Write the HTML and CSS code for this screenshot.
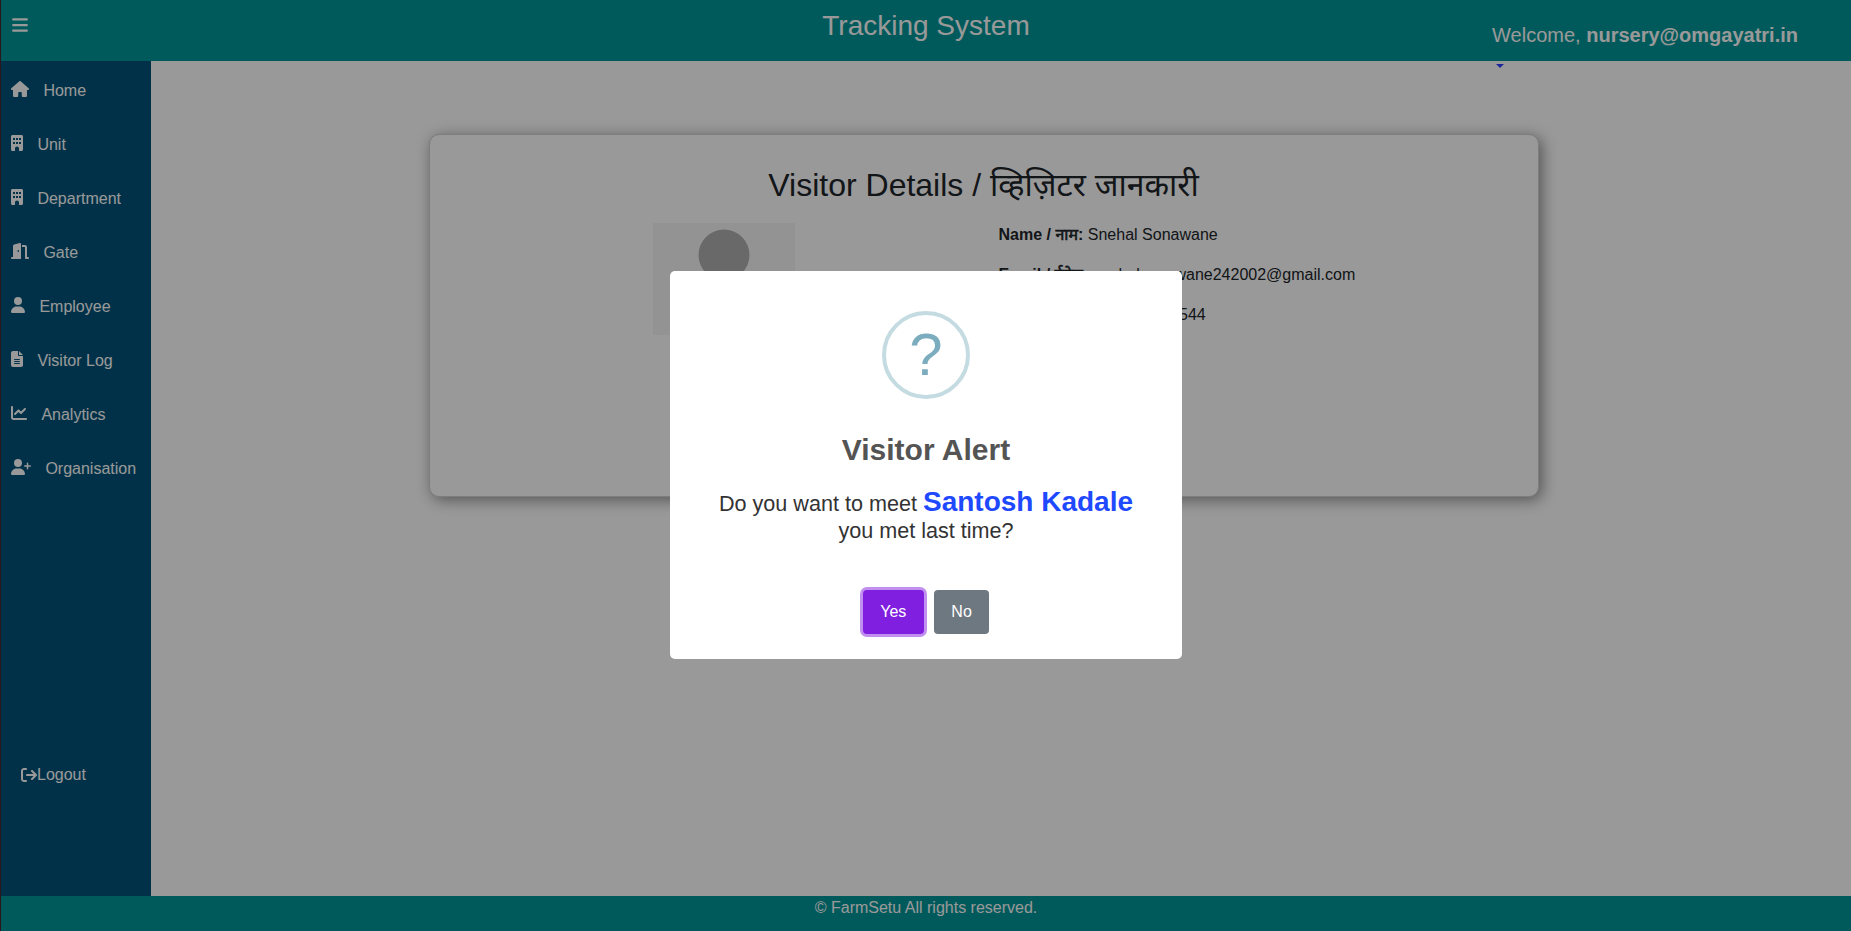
FILE: index.html
```html
<!DOCTYPE html>
<html lang="en">
<head>
<meta charset="utf-8">
<title>Tracking System</title>
<link rel="stylesheet" href="styles.css">
</head>
<body>
<div class="app">
  <header class="header">
    <svg class="menu-icon" width="16" height="18" viewBox="0 0 448 512"><path d="M0 96c0-17.700 14.300-32 32-32h384c17.700 0 32 14.300 32 32s-14.300 32-32 32H32C14.300 128 0 113.700 0 96zm0 160c0-17.700 14.300-32 32-32h384c17.700 0 32 14.300 32 32s-14.300 32-32 32H32c-17.700 0-32-14.300-32-32zm448 160c0 17.700-14.300 32-32 32H32c-17.700 0-32-14.300-32-32s14.300-32 32-32h384c17.700 0 32 14.300 32 32z"/></svg>
    <h1 class="brand">Tracking System</h1>
    <div class="welcome">Welcome, <strong>nursery@omgayatri.in</strong></div>
  </header>
  <div class="body">
    <nav class="sidebar">
      <a class="link"><svg width="18" height="16" viewBox="0 0 576 512"><path d="M575.800 255.500c0 18-15 32.100-32 32.100h-32l.7 160.200c0 2.700-.2 5.400-.5 8.100V472c0 22.100-17.900 40-40 40h-88c-22.100 0-40-17.900-40-40v-88c0-17.700-14.300-32-32-32h-48c-17.700 0-32 14.300-32 32v88c0 22.100-17.900 40-40 40h-88c-22.100 0-40-17.900-40-40V287.600H32c-18 0-32-14-32-32.100 0-9 3-17 10-24L266.400 8c7-7 15-8 22-8s15 2 21 7l255.400 224.500c8 7 12 15 11 24z"/></svg><span>Home</span></a>
      <a class="link"><svg width="12" height="16" viewBox="0 0 384 512"><path fill-rule="evenodd" d="M48 0C21.500 0 0 21.500 0 48v416c0 26.500 21.500 48 48 48h80v-80c0-35 29-64 64-64s64 29 64 64v80h80c26.500 0 48-21.500 48-48V48c0-26.500-21.500-48-48-48zM64 96h64v64H64zM160 96h64v64h-64zM256 96h64v64h-64zM64 224h64v64H64zM160 224h64v64h-64zM256 224h64v64h-64z"/></svg><span>Unit</span></a>
      <a class="link"><svg width="12" height="16" viewBox="0 0 384 512"><path fill-rule="evenodd" d="M48 0C21.500 0 0 21.500 0 48v416c0 26.500 21.500 48 48 48h80v-80c0-35 29-64 64-64s64 29 64 64v80h80c26.500 0 48-21.500 48-48V48c0-26.500-21.500-48-48-48zM64 96h64v64H64zM160 96h64v64h-64zM256 96h64v64h-64zM64 224h64v64H64zM160 224h64v64h-64zM256 224h64v64h-64z"/></svg><span>Department</span></a>
      <a class="link"><svg width="18" height="16" viewBox="0 0 576 512"><path fill-rule="evenodd" d="M320 32c0-10-4.500-19.300-12.300-25.300S289.800-1.500 280.200 1l-179.900 45C79 51.300 64 70.500 64 92.500V448H32c-17.700 0-32 14.300-32 32s14.300 32 32 32h288V32zm-64 224c0 17.700-10.700 32-24 32s-24-14.300-24-32 10.700-32 24-32 24 14.300 24 32zm96-128h96v352c0 17.700 14.300 32 32 32h64c17.700 0 32-14.300 32-32s-14.300-32-32-32h-32V128c0-35.300-28.700-64-64-64h-96z"/></svg><span>Gate</span></a>
      <a class="link"><svg width="14" height="16" viewBox="0 0 448 512"><path d="M224 256a128 128 0 1 0 0-256 128 128 0 1 0 0 256zm-45.700 48C79.800 304 0 383.800 0 482.300 0 498.700 13.300 512 29.700 512h388.600c16.400 0 29.700-13.300 29.700-29.700 0-98.500-79.800-178.300-178.300-178.300z"/></svg><span>Employee</span></a>
      <a class="link"><svg width="12" height="16" viewBox="0 0 384 512"><path fill-rule="evenodd" d="M64 0C28.700 0 0 28.700 0 64v384c0 35.300 28.700 64 64 64h256c35.300 0 64-28.700 64-64V160H256c-17.700 0-32-14.300-32-32V0zm192 0v128h128zM112 256h160c21 0 21 32 0 32H112c-21 0-21-32 0-32zm0 64h160c21 0 21 32 0 32H112c-21 0-21-32 0-32zm0 64h160c21 0 21 32 0 32H112c-21 0-21-32 0-32z"/></svg><span>Visitor Log</span></a>
      <a class="link"><svg width="16" height="16" viewBox="0 0 512 512"><path d="M64 64c0-17.700-14.300-32-32-32S0 46.300 0 64v336c0 44.200 35.800 80 80 80h400c17.700 0 32-14.300 32-32s-14.300-32-32-32H80c-8.800 0-16-7.200-16-16zm406.600 86.600c12.500-12.500 12.500-32.800 0-45.300s-32.800-12.500-45.300 0L320 210.700l-57.400-57.300c-12.500-12.500-32.800-12.500-45.300 0l-112 112c-12.500 12.500-12.500 32.800 0 45.300s32.800 12.500 45.300 0l89.400-89.400 57.400 57.400c12.500 12.500 32.800 12.500 45.300 0z"/></svg><span>Analytics</span></a>
      <a class="link"><svg width="20" height="16" viewBox="0 0 640 512"><path d="M96 128a128 128 0 1 1 256 0 128 128 0 1 1-256 0zM0 482.300C0 383.800 79.800 304 178.300 304h91.400c98.500 0 178.300 79.800 178.300 178.300 0 16.400-13.300 29.700-29.700 29.700H29.700C13.300 512 0 498.700 0 482.300zM504 312v-64h-64c-13.300 0-24-10.700-24-24s10.700-24 24-24h64v-64c0-13.300 10.700-24 24-24s24 10.700 24 24v64h64c13.300 0 24 10.700 24 24s-10.700 24-24 24h-64v64c0 13.300-10.700 24-24 24s-24-10.700-24-24z"/></svg><span>Organisation</span></a>
      <a class="logout"><svg width="16" height="16" viewBox="0 0 512 512"><path d="M502.600 278.600c12.500-12.500 12.500-32.800 0-45.300l-128-128c-12.500-12.500-32.800-12.500-45.300 0s-12.500 32.800 0 45.300l73.400 73.400H192c-17.700 0-32 14.300-32 32s14.300 32 32 32h210.700l-73.400 73.400c-12.500 12.500-12.500 32.800 0 45.300s32.800 12.500 45.300 0zM160 96c17.700 0 32-14.300 32-32s-14.300-32-32-32H96C43 32 0 75 0 128v256c0 53 43 96 96 96h64c17.700 0 32-14.300 32-32s-14.300-32-32-32H96c-17.700 0-32-14.300-32-32V128c0-17.700 14.300-32 32-32z"/></svg><span>Logout</span></a>
    </nav>
    <main class="main">
      <span class="caret"></span>
      <section class="card">
        <h2 class="card-title">Visitor Details / व्हिज़िटर जानकारी</h2>
        <div class="details">
          <div class="photo-col">
            <svg class="photo" width="142" height="112" viewBox="0 0 142 112"><rect width="142" height="112" fill="#f6f6f6"/><circle cx="71" cy="32" r="25.500" fill="#b0b0b0"/><path d="M28 112c0-62 86-62 86 0z" fill="#b0b0b0"/></svg>
          </div>
          <div class="info-col">
            <p><strong>Name / <span class="hi">नाम</span>:</strong> Snehal Sonawane</p>
            <p><strong>Email / <span class="hi">ईमेल</span>:</strong> snehalsonawane242002@gmail.com</p>
            <p><strong>Mobile / <span class="hi">मोबाईल</span>:</strong> <span class="phone">544</span></p>
          </div>
        </div>
      </section>
    </main>
  </div>
  <footer class="footer">© FarmSetu All rights reserved.</footer>
</div>
<div class="backdrop">
  <div class="popup">
    <div class="q-icon"><span>?</span></div>
    <h2 class="popup-title">Visitor Alert</h2>
    <div class="popup-text">Do you want to meet <b>Santosh Kadale</b> you met last time?</div>
    <div class="actions">
      <button class="btn yes">Yes</button>
      <button class="btn no">No</button>
    </div>
  </div>
</div>
</body>
</html>
```
FILE: styles.css
```css
* { box-sizing: border-box; }
body {
  margin: 0;
  height: 931px;
  overflow: hidden;
  font: 16px/24px "Liberation Sans", "Noto Sans", sans-serif;
  color: #212529;
  background: #fff;
}
.app {
  height: 931px;
  display: flex;
  flex-direction: column;
  border-left: 1px solid #2a171e;
}
.header {
  height: 61px;
  flex: none;
  display: grid;
  grid-template-columns: 1fr auto 1fr;
  background: #009698;
  color: #fff;
}
.menu-icon { margin: 16px 0 0 11px; fill: #fff; }
.brand {
  margin: 9px 0 0;
  font-size: 28px;
  font-weight: 400;
  line-height: 34px;
}
.welcome {
  justify-self: end;
  margin: 20px 53px 0 0;
  font-size: 20px;
  line-height: 30px;
}
.body { flex: 1; display: flex; min-height: 0; }
.sidebar {
  width: 150px;
  flex: none;
  display: flex;
  flex-direction: column;
  padding-top: 2px;
  background: #005378;
  color: #fff;
}
.sidebar svg { fill: #fff; flex: none; }
.link {
  height: 54px;
  padding: 16px 0 0 10px;
  display: flex;
  gap: 14.400px;
}
.link svg { margin-top: 2px; }
.logout { display: flex; margin: 268px 0 0 20px; }
.logout svg { margin-top: 4px; }
.main {
  flex: 1;
  display: flex;
  flex-direction: column;
}
.caret {
  width: 0;
  height: 0;
  margin: 3px 0 0 1345px;
  border: 4px solid transparent;
  border-top-color: #2a3fff;
  border-bottom: 0;
}
.card {
  width: 1110px;
  height: 363px;
  margin: 66px 0 0 278px;
  padding-top: 31px;
  border: 1px solid #d0d0d0;
  border-radius: 10px;
  box-shadow: 3px 3px 15px rgba(0, 0, 0, .45);
  background: #fff;
}
.card-title {
  margin: 0 1px 0 0;
  text-align: center;
  font-size: 32px;
  font-weight: 400;
  line-height: 38px;
}
.details { display: flex; margin-top: 19px; }
.photo-col { width: 568.500px; padding-left: 223px; }
.photo { display: block; }
.info-col p { margin: 0 0 16px; white-space: nowrap; }
.hi { font-weight: 400; -webkit-text-stroke: .6px currentColor; }
.phone { margin-left: 61px; }
.footer {
  height: 35px;
  flex: none;
  text-align: center;
  background: #009698;
  color: #fff;
}
.backdrop {
  position: fixed;
  inset: 0 0 0 1px;
  display: flex;
  justify-content: center;
  align-items: flex-start;
  padding-top: 271px;
  background: rgba(0, 0, 0, .4);
}
.popup {
  width: 512px;
  height: 388px;
  display: flex;
  flex-direction: column;
  padding-bottom: 25px;
  border-radius: 5px;
  background: #fff;
  color: #545454;
  text-align: center;
}
.q-icon {
  width: 88px;
  height: 88px;
  flex: none;
  margin: 40px auto 0;
  border: 4px solid #c5dbe2;
  border-radius: 50%;
  color: #7cadbe;
  font-size: 60px;
  line-height: 80px;
}
.popup-title {
  margin: 33px 0 0;
  font-size: 30px;
  line-height: 36px;
}
.popup-text {
  margin: 20px 45px 0;
  font-size: 21.6px;
  line-height: 27px;
  color: #333;
}
.popup-text b { font-size: 28px; color: #1f49ff; }
.actions {
  display: flex;
  justify-content: center;
  gap: 10px;
  margin-top: auto;
}
.btn {
  height: 44px;
  padding: 0 17.500px;
  border: 0;
  border-radius: 4px;
  font: 16px "Liberation Sans", sans-serif;
  color: #fff;
}
.yes { background: #801fe0; box-shadow: 0 0 0 3px #c08fef; }
.no { background: #6e7881; }
```
